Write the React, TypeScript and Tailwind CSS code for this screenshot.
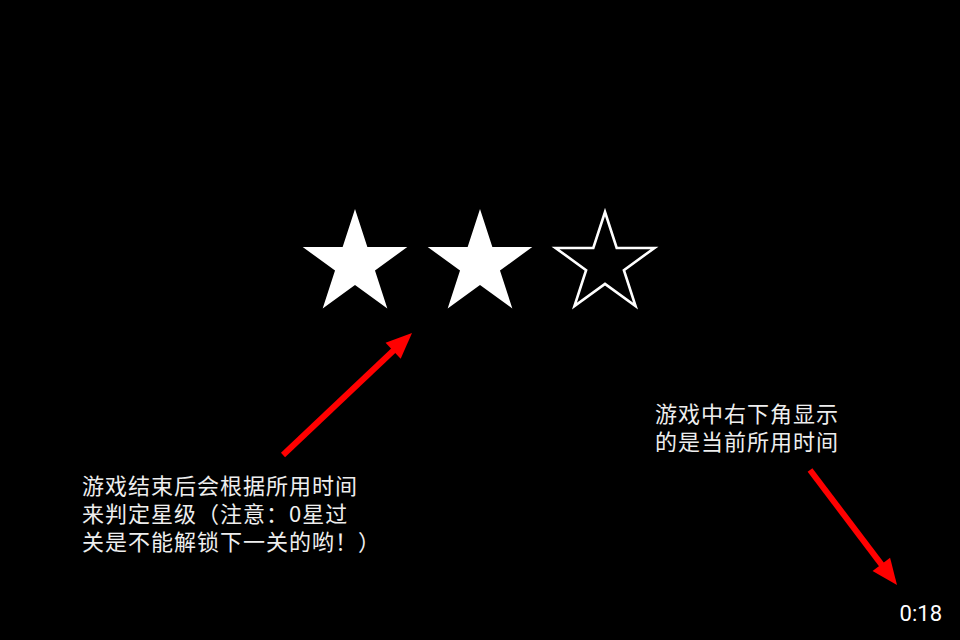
import React from "react";

const starPoints = (r: number, c = 56) =>
  Array.from({ length: 10 }, (_, i) => {
    const a = ((-90 + 36 * i) * Math.PI) / 180;
    const rr = i % 2 === 0 ? r : r * 0.382;
    return `${(c + rr * Math.cos(a)).toFixed(2)},${(c + rr * Math.sin(a)).toFixed(2)}`;
  }).join(" ");

function Star({ filled }: { filled: boolean }) {
  return (
    <svg width="112" height="112" viewBox="0 0 112 112">
      {filled ? (
        <polygon points={starPoints(55)} fill="#ffffff" />
      ) : (
        <polygon points={starPoints(52)} fill="none" stroke="#ffffff" strokeWidth="2.6" />
      )}
    </svg>
  );
}

function Arrow({ x1, y1, x2, y2 }: { x1: number; y1: number; x2: number; y2: number }) {
  const len = Math.hypot(x2 - x1, y2 - y1);
  const ux = (x2 - x1) / len;
  const uy = (y2 - y1) / len;
  const bx = x2 - ux * 26;
  const by = y2 - uy * 26;
  const px = -uy * 11;
  const py = ux * 11;
  return (
    <g>
      <line x1={x1} y1={y1} x2={bx + ux * 2} y2={by + uy * 2} stroke="#ff0000" strokeWidth="6" />
      <polygon points={`${x2},${y2} ${bx + px},${by + py} ${bx - px},${by - py}`} fill="#ff0000" />
    </g>
  );
}

const cjk = "font-['Noto_Sans_CJK_SC','Noto_Sans',sans-serif]";

export default function App() {
  return (
    <div className="relative w-[960px] h-[640px] bg-black overflow-hidden">
      <div className="flex justify-center gap-[13px] pt-[208px]">
        <Star filled />
        <Star filled />
        <Star filled={false} />
      </div>

      {/* annotations */}
      <svg className="absolute inset-0 pointer-events-none" width="960" height="640">
        <Arrow x1={283} y1={455} x2={412} y2={333} />
        <Arrow x1={810} y1={470} x2={897} y2={585} />
      </svg>

      <div className={`absolute left-[82px] top-[470px] text-[22px] leading-[28px] tracking-[1px] text-[#eeeeee] whitespace-nowrap ${cjk}`}>
        <div>游戏结束后会根据所用时间</div>
        <div>来判定星级（注意：0星过</div>
        <div>关是不能解锁下一关的哟！）</div>
      </div>

      <div className={`absolute left-[655px] top-[398px] text-[22px] leading-[28px] tracking-[1px] text-[#eeeeee] whitespace-nowrap ${cjk}`}>
        <div>游戏中右下角显示</div>
        <div>的是当前所用时间</div>
      </div>

      <div className="absolute right-[18px] top-[603px] text-[22px] leading-[22px] text-white font-['Roboto','Liberation_Sans',sans-serif]">
        0:18
      </div>
    </div>
  );
}
